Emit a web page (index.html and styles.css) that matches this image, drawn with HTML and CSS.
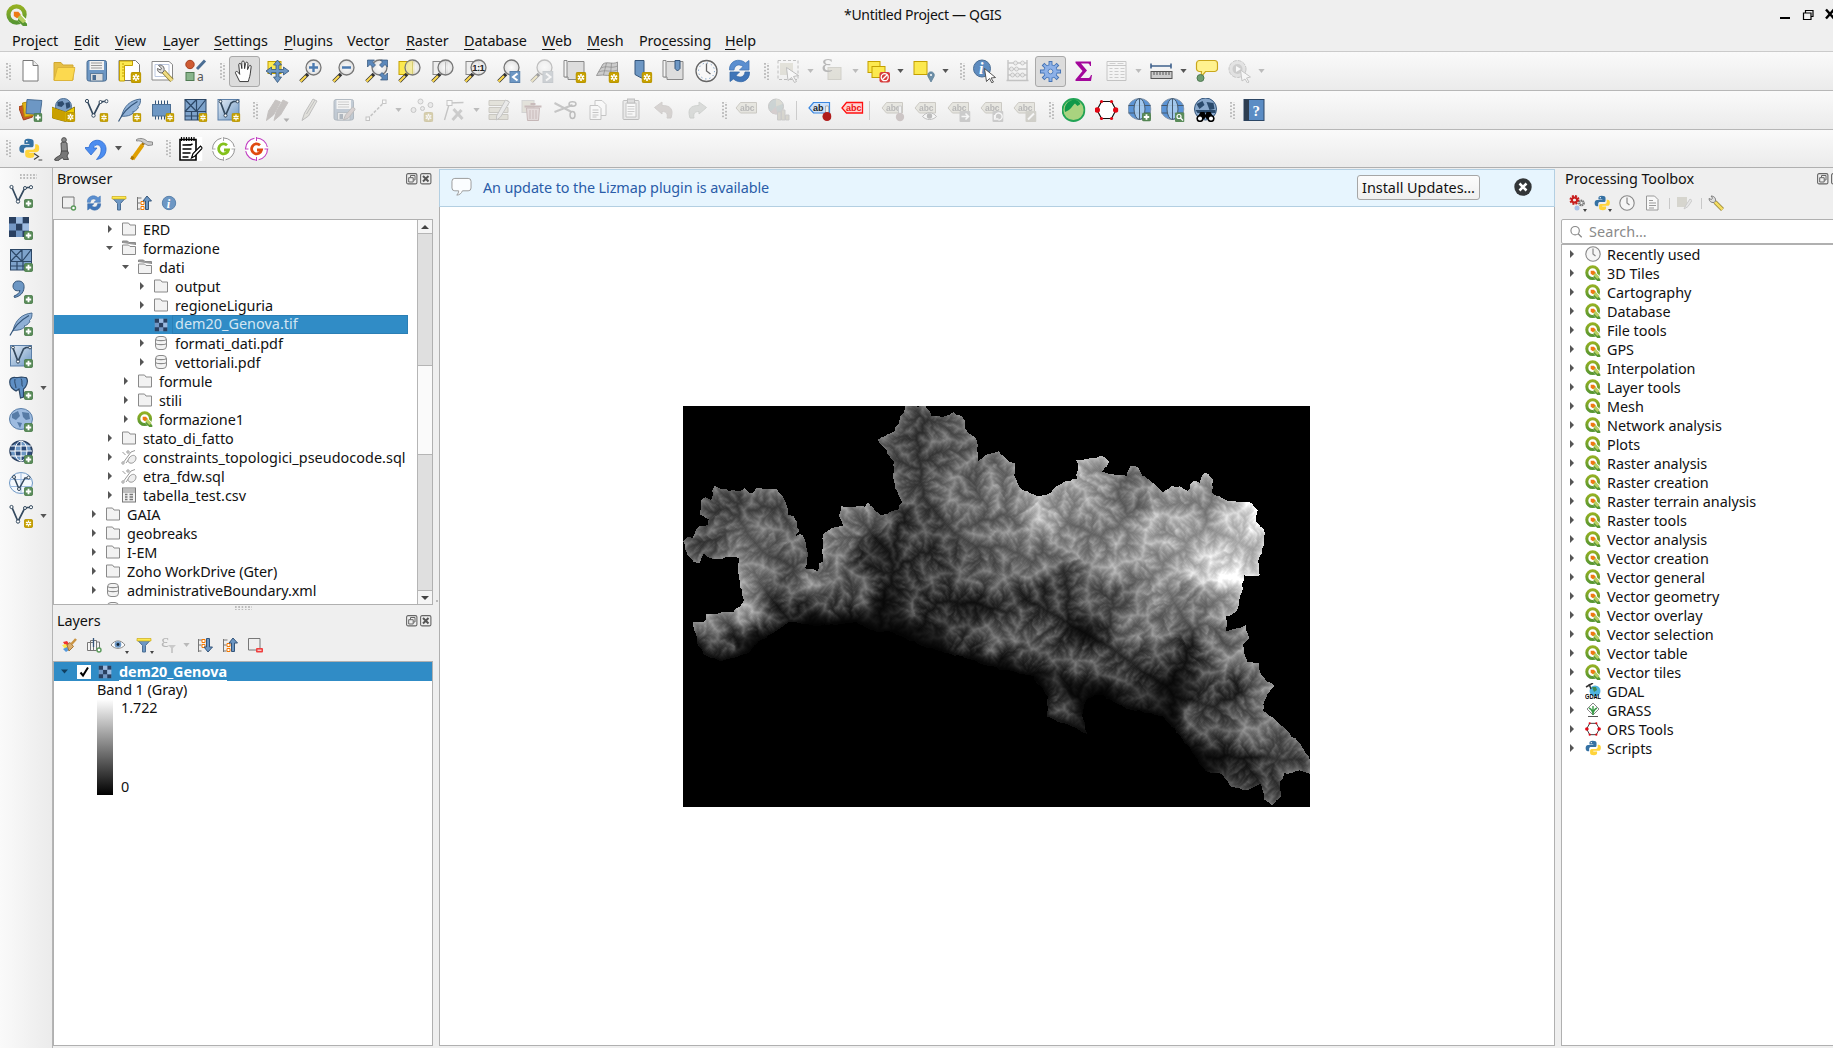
FILE: index.html
```html
<!DOCTYPE html>
<html lang="en">
<head>
<meta charset="utf-8">
<title>*Untitled Project — QGIS</title>
<link rel="stylesheet" href="styles.css">
</head>
<body>
<svg class="defs" aria-hidden="true">
<defs>
<linearGradient id="gq" x1="0" y1="0" x2="0" y2="1"><stop offset="0" stop-color="#93b023"/><stop offset="1" stop-color="#589632"/></linearGradient>
<linearGradient id="gb" x1="0" y1="0" x2="1" y2="1"><stop offset="0" stop-color="#e4ecf5"/><stop offset="1" stop-color="#6d97c4"/></linearGradient>
<radialGradient id="gl"><stop offset="0" stop-color="#fff"/><stop offset="1" stop-color="#ddd"/></radialGradient>
</defs>
<symbol id="star" viewBox="0 0 10 10"><rect x=".5" y=".5" width="9" height="9" rx="1.5" fill="#c8a200" stroke="#b89500"/><path d="M5 1.8v6.4M2.2 3.4l5.6 3.2M7.8 3.4L2.2 6.6" stroke="#fff" stroke-width="1.5"/><circle cx="5" cy="5" r=".8" fill="#c8a200"/></symbol>
<symbol id="plus" viewBox="0 0 10 10"><rect x=".5" y=".5" width="9" height="9" rx="1.5" fill="#5a8c5a" stroke="#4c7e4c"/><path d="M5 2v6M2 5h6" stroke="#fff" stroke-width="2"/></symbol>
<symbol id="qgis" viewBox="0 0 24 24"><circle cx="11.5" cy="11.5" r="8.8" fill="none" stroke="url(#gq)" stroke-width="4.6"/><path d="M13 12h4.5l6 6v5.5H18l-6-6z" fill="#fff"/><path d="M15 13.5l8 8V24h-4.5l-6-6z" fill="#589632"/><path d="M11 11h4l7 7.5-3.5 2.5-7.5-7z" fill="#b5cf60"/><path d="M8.500 8.500h5l2.500 3-4 4-3.500-2.500z" fill="#ee7913"/></symbol>
<symbol id="new" viewBox="0 0 24 24"><path d="M4.500 1.500h10l5 5v15.500h-15z" fill="#fff" stroke="#777"/><path d="M14.500 1.500v5h5" fill="#eee" stroke="#777"/></symbol>
<symbol id="open" viewBox="0 0 24 24"><path d="M2.500 21V3.500h7l2 2.500h10v15z" fill="#e6bf44" stroke="#d0a730"/><path d="M2.500 21.500L6 8.500h17.500L21 21.500z" fill="#fcd94f" stroke="#dcb43a"/></symbol>
<symbol id="save" viewBox="0 0 24 24"><rect x="2.500" y="1.500" width="19.500" height="20.500" rx="2" fill="#6d97c4" stroke="#4b6e94"/><rect x="5" y="2" width="14.500" height="9" fill="#f2f2f2"/><path d="M6.500 4h11M6.500 6.500h11M6.500 9h11" stroke="#999"/><rect x="6" y="14.500" width="12.500" height="7.500" fill="#ddd" stroke="#5d7c9c"/><rect x="8" y="16" width="3.500" height="5" fill="#4a6c92"/></symbol>
<symbol id="layout" viewBox="0 0 24 24"><path d="M1.500 1.500h16.500l4 4v16h-20.500z" fill="#fff" stroke="#777"/><path d="M2 2h13v4.500H7V22H2z" fill="#fce94f" stroke="#c4a000"/><path d="M4.500 5h2M4.500 8h2M4.500 11h2M4.500 14h2M4.500 17h2" stroke="#c4a000"/><use href="#star" x="13" y="13" width="11" height="11"/></symbol>
<symbol id="layman" viewBox="0 0 24 24"><path d="M1.500 2.500h17l3.500 3v15.500h-20.500z" fill="#fff" stroke="#888"/><path d="M4.500 5.500h14v12h-14z" fill="none" stroke="#bcc8e0"/><path d="M13 12.500l8.500 9" stroke="#8a7a30" stroke-width="4.600"/><path d="M13 12.500l8.500 9" stroke="#f0dc82" stroke-width="3"/><path d="M8 6.500c3-1.500 6.500 1 5.500 5.500l-2 2c-3 0-5-2-4.500-4.500l3 1.500 1-2z" fill="#ddd" stroke="#666"/></symbol>
<symbol id="style" viewBox="0 0 24 24"><circle cx="6.500" cy="5.500" r="4.200" fill="#cf5c34" stroke="#a54020"/><path d="M13.500 10l8-8.500" stroke="#4b6e94" stroke-width="3"/><rect x="2.500" y="13.500" width="8" height="8" fill="#89b58c" stroke="#4f7a52"/><text x="13.500" y="22" font-family="Noto Sans" font-size="12" fill="#555">a</text></symbol>
<symbol id="hand" viewBox="0 0 24 24"><path d="M7 22.500L3 14.500c-1.500-2.500 1-3.500 2.500-1.500l1.500 2-1-10c0-2 2.300-2 2.600 0l.6 4V2.500c0-2 2.500-2 2.600 0l.3 6.500 1-5.500c.3-2 2.700-1.500 2.500.5l-.4 6 1.500-3.500c.8-1.700 2.700-1 2.200 1L18 14.500c-.6 4-1.500 5-2 8z" fill="#fff" stroke="#333"/></symbol>
<symbol id="panto" viewBox="0 0 24 24"><rect x="2.500" y="2.500" width="13" height="12" fill="#fce94f" stroke="#c4a000"/><path d="M12 1l4 5h-2.500v4.500H18V8l5.500 4-5.500 4v-2.500h-4.500V18H16l-4 5.500L8 18h2.500v-4.500H6V16L.5 12 6 8v2.500h4.500V6H8z" fill="#6d97c4" stroke="#34557a" stroke-width=".8"/></symbol>
<symbol id="lens" viewBox="0 0 24 24"><path d="M2 22.500L9.500 15" stroke="#333" stroke-width="3.600"/><path d="M2 22.500l5.500-5.500" stroke="#fcd94f" stroke-width="2.200"/><circle cx="15" cy="8.500" r="7.500" fill="url(#gl)" stroke="#777" stroke-width="1.300" fill-opacity=".8"/></symbol>
<symbol id="zin" viewBox="0 0 24 24"><use href="#lens"/><path d="M15 4v9M10.500 8.500h9" stroke="#4b7ab0" stroke-width="2.400"/></symbol>
<symbol id="zout" viewBox="0 0 24 24"><use href="#lens"/><path d="M10.500 8.500h9" stroke="#4b7ab0" stroke-width="2.400"/></symbol>
<symbol id="zfull" viewBox="0 0 24 24"><use href="#lens"/><path d="M3 1h7L8 3l3 3-2.500 2.500-3-3L3 8zM23 1h-7l2 2-3 3 2.500 2.500 3-3L23 8zM23 21h-7l2-2-3-3 2.500-2.500 3 3 2.500-2.500z" fill="#5b88bb" stroke="#34557a" stroke-width=".7"/></symbol>
<symbol id="zsel" viewBox="0 0 24 24"><rect x="1.500" y="2.500" width="15" height="13" fill="#fce94f" stroke="#c4a000"/><use href="#lens"/><path d="M15 2.500v12.500" stroke="#c9c16a"/><path d="M9 4a7.500 7.500 0 0 1 6-2.500V15A7 7 0 0 1 9 12z" fill="#f3e882" opacity=".6"/></symbol>
<symbol id="zlay" viewBox="0 0 24 24"><rect x="2.500" y="2.500" width="14" height="13" fill="#eee" stroke="#888"/><use href="#lens"/><path d="M15 3v12" stroke="#bbb"/></symbol>
<symbol id="z11" viewBox="0 0 24 24"><rect x="2.500" y="2.500" width="13" height="13" fill="#eee" stroke="#888"/><use href="#lens"/><text x="8.700" y="12" font-family="Liberation Sans" font-weight="bold" font-size="9.500" fill="#222" textLength="12.500">1:1</text></symbol>
<symbol id="zlast" viewBox="0 0 24 24"><use href="#lens"/><rect x="13.500" y="12.500" width="10" height="11" fill="#6d97c4" stroke="#5b82ac"/><path d="M21 14.500L16.500 18l4.500 3.500" fill="none" stroke="#fff" stroke-width="2"/></symbol>
<symbol id="znext" viewBox="0 0 24 24"><use href="#lens"/><rect x="13.500" y="12.500" width="10" height="11" fill="#9ab" stroke="#89a"/><path d="M16.500 14.500L21 18l-4.500 3.500" fill="none" stroke="#fff" stroke-width="2"/></symbol>
<symbol id="map" viewBox="0 0 24 24"><path d="M5.500 2.500h16v18h-16v-2.500H3.500c-2 0-2-2.500 0-2.500V2.500" fill="#ddd" stroke="#888"/><path d="M1.500 1.500h3v16.500h-3z" fill="#f4f4f4" stroke="#888"/></symbol>
<symbol id="newmap" viewBox="0 0 24 24"><use href="#map"/><use href="#star" x="13" y="13" width="11" height="11"/></symbol>
<symbol id="new3d" viewBox="0 0 24 24"><path d="M1 16.500L7.500 5c4-3 10 1 14.500-2v13c-6 2-13-1-21 .5z" fill="#ccc" stroke="#999"/><path d="M5.500 9c6-3 10 1 16.500-2M3 13c7-3 12 1 19-2M11 4L8 16M16 4l-1 12" stroke="#888" fill="none" stroke-width=".7"/><use href="#star" x="13" y="13" width="11" height="11"/></symbol>
<symbol id="newbm" viewBox="0 0 24 24"><path d="M6.500 1.500h9V20l-4.500-2-4.500-2.500z" fill="#6d97c4" stroke="#34557a"/><use href="#star" x="13" y="13" width="11" height="11"/></symbol>
<symbol id="bm" viewBox="0 0 24 24"><use href="#map"/><path d="M13.500 1.500h5v8L16 12l-2.500-2.500z" fill="#6d97c4" stroke="#34557a"/></symbol>
<symbol id="clock" viewBox="0 0 24 24"><circle cx="12" cy="12" r="10.500" fill="#f8f8f8" stroke="#666" stroke-width="1.300"/><circle cx="12" cy="12" r="8" fill="none" stroke="#6d97c4" stroke-dasharray="1.200 3"/><path d="M12 4.500V12l4 3" fill="none" stroke="#666" stroke-width="1.300"/></symbol>
<symbol id="refresh" viewBox="0 0 24 24"><path d="M2 11C1.500 1.500 12-1.500 18 4l3.500-2.500V11H12l3.500-3.500C11.500 4.500 7 6 6.500 11z" fill="#5b8fd0" stroke="#4477b5" stroke-width=".8"/><path d="M22 13c.5 9.500-10 12.500-16 7l-3.500 2.500V13H12l-3.500 3.500c4 3 8.500 1.500 9-3.500z" fill="#3f75b8" stroke="#366aa8" stroke-width=".8"/></symbol>
<symbol id="select" viewBox="0 0 24 24"><rect x="1.500" y="1.500" width="20" height="19" fill="none" stroke="#777" stroke-dasharray="3 2"/><rect x="3.500" y="4" width="13" height="12" fill="#cfc9a6"/><path d="M10 8.500l12 8-5 1 3 5-2 1-3-5-3.500 3z" fill="#fff" stroke="#777"/></symbol>
<symbol id="selexp" viewBox="0 0 24 24"><rect x="6.500" y="8.500" width="13" height="12" fill="#cfc9a6" stroke="#aaa489"/><text x="0" y="13" font-family="Liberation Serif" font-size="27" fill="#666">ε</text></symbol>
<symbol id="desel" viewBox="0 0 24 24"><rect x="1.500" y="2.500" width="12" height="11" fill="#fce94f" stroke="#c4a000"/><rect x="5.500" y="7.500" width="13" height="11" fill="#fce94f" stroke="#c4a000"/><rect x="13" y="13" width="10.500" height="10.500" rx="2" fill="#d63b3b"/><circle cx="18.200" cy="18.200" r="3.500" fill="none" stroke="#fff" stroke-width="1.300"/><path d="M15.700 20.700l5-5" stroke="#fff" stroke-width="1.300"/></symbol>
<symbol id="selloc" viewBox="0 0 24 24"><rect x="2.500" y="2.500" width="13" height="13" fill="#fce94f" stroke="#c4a000"/><path d="M19.500 23l-3-5.500a3.300 3.300 0 1 1 6 0z" fill="#6d8fa8" stroke="#557891" stroke-width=".7"/><circle cx="19.500" cy="16" r="1" fill="#fff"/></symbol>
<symbol id="info" viewBox="0 0 24 24"><circle cx="9.500" cy="9.500" r="8.500" fill="#5e8cc0" stroke="#4b6e94"/><text x="6.500" y="15" font-family="Liberation Serif" font-style="italic" font-weight="bold" font-size="16" fill="#fff">i</text><path d="M12 9.500l11 9-4.500.5 2.500 4-1.500 1-2.500-4.500-3 3z" fill="#fff" stroke="#444" stroke-width=".9"/></symbol>
<symbol id="abacus" viewBox="0 0 24 24"><path d="M2.500 1v20M21.500 1v20M1 21.500h22M2 4h20M2 10h20M2 16h20" stroke="#888" stroke-width="1.500"/><g fill="#ddd" stroke="#888"><circle cx="10" cy="4" r="2"/><circle cx="17" cy="4" r="2"/><circle cx="6" cy="10" r="2"/><circle cx="11" cy="10" r="2"/><circle cx="7" cy="16" r="2"/><circle cx="12" cy="16" r="2"/><circle cx="17" cy="16" r="2"/></g></symbol>
<symbol id="gear" viewBox="0 0 24 24"><g stroke="#4573b4" stroke-width="4"><path d="M12 1v22M1 12h22M4.200 4.200l15.600 15.600M19.800 4.200L4.200 19.800"/></g><circle cx="12" cy="12" r="7" fill="#8db1e8" stroke="#4f7ec0"/><g stroke="#8db1e8" stroke-width="2.200"><path d="M12 2v20M2 12h20M5 5l14 14M19 5L5 19"/></g><circle cx="12" cy="12" r="2.500" fill="#dcdcdc" stroke="#4f7ec0"/></symbol>
<symbol id="sigma" viewBox="0 0 24 24"><path d="M4 2.500h15.500V7h-1c-.5-2-1-2.500-3-2.500H9.500l6 7-6.500 7.500h7c2 0 2.500-.5 3.500-3h1l-1 6H4v-1.500l7-8.500-7-8z" fill="#a3079b"/></symbol>
<symbol id="table" viewBox="0 0 24 24"><path d="M2.500 2.500h19v19h-19zM2.500 6.500h19" fill="#f8f8f8" stroke="#888"/><path d="M5 4.500h6M13 4.500h6M5 9.500h3M5 12.500h3M5 15.500h3M5 18.500h3M10 9.500h4M10 12.500h4M10 15.500h4M10 18.500h4M16 9.500h4M16 12.500h4M16 15.500h4M16 18.500h4" stroke="#999"/></symbol>
<symbol id="ruler" viewBox="0 0 24 24"><path d="M1.500 7h20M1.500 4.500v5M21.500 4.500v5" stroke="#3f618c" stroke-width="1.600"/><rect x="1.500" y="12.500" width="21" height="7" fill="#ccc" stroke="#555"/><path d="M4.500 13v3M7.500 13v3M10.500 13v3M13.500 13v3M16.500 13v3M19.500 13v3" stroke="#555"/></symbol>
<symbol id="tip" viewBox="0 0 24 24"><path d="M5 1.500h15a3 3 0 0 1 3 3v5a3 3 0 0 1-3 3h-9L6.500 18 7 12.500H5a3 3 0 0 1-3-3v-5a3 3 0 0 1 3-3z" fill="#fff28f" stroke="#c9a71c" stroke-width="1.200"/><circle cx="6" cy="19" r="3.500" fill="#6f9d72" stroke="#4f7a52"/></symbol>
<symbol id="action" viewBox="0 0 24 24"><circle cx="10" cy="10" r="8.500" fill="#ccc" stroke="#888" stroke-dasharray="4 1"/><circle cx="10" cy="10" r="5" fill="#999"/><path d="M8.500 7l5 3-5 3z" fill="#fff"/><path d="M13 11l10 7-4 1 2.500 4-1.500 1-2.500-4-3 2z" fill="#fff" stroke="#888"/></symbol>
<symbol id="addsrc" viewBox="0 0 24 24"><path d="M0 9l9-3 5 13-9 3z" fill="#c8582c" stroke="#a04018"/><path d="M4 5l10-2 2 14-10 2z" fill="#e3b51e" stroke="#b98e00"/><path d="M8.500 1.500l15 1-2 14-14-1z" fill="#6d97c4" stroke="#4b6e94"/><use href="#plus" x="15" y="15" width="9" height="9"/></symbol>
<symbol id="gpkg" viewBox="0 0 24 24"><circle cx="12" cy="8.500" r="8" fill="#7d9fc6" stroke="#4b6e94"/><path d="M6 4l5-1 2 3-3 3-4-1zM14 5l4-1 1 5-4 2z" fill="#2d4b6e"/><path d="M0 9l14 5 9-5v10l-9 4.500L1 20z" fill="#f0d000" stroke="#806800" stroke-width=".8"/><path d="M1 10l13 4v9.500L1 20z" fill="#c9a000"/><use href="#star" x="14" y="14" width="10" height="10"/></symbol>
<symbol id="vee" viewBox="0 0 24 24"><path d="M3 3.500L9 17.500 15 5.500 18 3.500h4" fill="none" stroke="#34495e" stroke-width="1.700"/><g fill="#fff" stroke="#34495e"><circle cx="2.500" cy="3" r="1.600"/><circle cx="9" cy="17.500" r="1.700"/><circle cx="22" cy="3.200" r="1.600"/><circle cx="16" cy="4" r="1.500"/></g></symbol>
<symbol id="newshp" viewBox="0 0 24 24"><use href="#vee"/><use href="#star" x="15" y="15" width="9" height="9"/></symbol>
<symbol id="feather" viewBox="0 0 24 24"><path d="M4 19C6 8 13 2 23 1c0 5-1 6-3 8l1 .5c-2 3-4 4-6 4.500l1 .8c-3 3-7 3.500-11 3.500z" fill="#8fb0d6" stroke="#4b6e94"/><path d="M1 23.500C5 15 12 8 20 3.500" fill="none" stroke="#34557a" stroke-width="1.200"/></symbol>
<symbol id="newfea" viewBox="0 0 24 24"><use href="#feather"/><use href="#star" x="15" y="15" width="9" height="9"/></symbol>
<symbol id="chip" viewBox="0 0 24 24"><path d="M5 2.500v19M8 2.500v19M11 2.500v19M14 2.500v19M17 2.500v15" stroke="#34557a"/><rect x="2" y="6.500" width="18" height="11.500" fill="#6d97c4" stroke="#4b6e94"/><use href="#star" x="15" y="15" width="9" height="9"/></symbol>
<symbol id="meshi" viewBox="0 0 24 24"><rect x="1.500" y="1.500" width="21" height="20.500" fill="#7ea3cb" stroke="#2c4766"/><path d="M1.500 13.500h21M13 1.500v12M8 13.500v8.500M14 13.500v8.500M1.500 1.500l11.500 12M13 1.500l-11.500 12M22 2l-9 11.500M1.500 18h21" stroke="#2c4766" stroke-width="1.200"/></symbol>
<symbol id="newmesh" viewBox="0 0 24 24"><use href="#meshi"/><use href="#star" x="15" y="15" width="9" height="9"/></symbol>
<symbol id="vbox" viewBox="0 0 24 24"><rect x="1.500" y="1.500" width="21" height="20.500" fill="url(#gb)" stroke="#5b7fa8"/><path d="M4 4l5 13.500 5.500-12.500L17 3.500h4" fill="none" stroke="#34495e" stroke-width="1.700"/><g fill="#fff" stroke="#34495e"><circle cx="4" cy="3.500" r="1.400"/><circle cx="9" cy="17.500" r="1.600"/><circle cx="21" cy="3.500" r="1.400"/></g></symbol>
<symbol id="newvt" viewBox="0 0 24 24"><use href="#vbox"/><use href="#star" x="15" y="15" width="9" height="9"/></symbol>
<symbol id="pens" viewBox="0 0 24 24"><path d="M1 22.500L3 13 10 2l5 2-7 13zM8.500 22.500L11 13l6.500-11 5 2.500-7.500 12.500z" fill="#8f7f78" stroke="#8f7f78"/><path d="M18 20.500h6l-3 3.500z" fill="#555"/></symbol>
<symbol id="pen" viewBox="0 0 24 24"><path d="M3.500 22.500L6 15 14.500 1l4 2-8.500 15z" fill="#cdc8b0" stroke="#777"/><path d="M8 16L16.500 2" stroke="#777"/></symbol>
<symbol id="saveed" viewBox="0 0 24 24"><use href="#save"/><path d="M12 22l2-5 7-8 3 2-7 9z" fill="#c0a0a0" stroke="#777"/></symbol>
<symbol id="line" viewBox="0 0 24 24"><path d="M3 21L20 4" stroke="#888" stroke-width="1.600" stroke-dasharray="3 1.500"/><rect x="1.500" y="19" width="3.500" height="3.500" fill="#fff" stroke="#888"/><rect x="18" y="2" width="3.500" height="3.500" fill="#fff" stroke="#888"/></symbol>
<symbol id="points" viewBox="0 0 24 24"><g fill="#ddd" stroke="#888"><circle cx="4" cy="12" r="2.500"/><circle cx="11" cy="3.500" r="2.500"/><circle cx="21" cy="7" r="2.500"/><circle cx="13" cy="10.500" r="2"/></g><use href="#star" x="14" y="14" width="10" height="10"/></symbol>
<symbol id="vertex" viewBox="0 0 24 24"><path d="M2 22L7 5l14-.5" stroke="#888" fill="none" stroke-width="1.400"/><rect x="4.500" y="2.500" width="5" height="5" fill="#fff" stroke="#888"/><path d="M10 22l9-10M11 11l9 10" stroke="#999" stroke-width="3"/></symbol>
<symbol id="attrs" viewBox="0 0 24 24"><path d="M1.500 2.500h19v5h-19zM1.500 9.500h19v5h-19zM1.500 16.500h19v5h-19z" fill="#cfc9a6" stroke="#999074"/><path d="M9 18L18 2l4 2-9 15-4 3z" fill="#ddd" stroke="#888"/></symbol>
<symbol id="trash" viewBox="0 0 24 24"><rect x="1.500" y="2.500" width="12" height="12" fill="#cfc9a6" stroke="#aaa"/><path d="M4 8.500h17M10 6h5" stroke="#a66" stroke-width="2"/><path d="M6 10h13l-1 12.500H7z" fill="#e0b8b8" stroke="#a66"/><path d="M9.500 12v9M12.500 12v9M15.500 12v9" stroke="#a66"/></symbol>
<symbol id="cut" viewBox="0 0 24 24"><path d="M1 5l17 9M1 14l18-7" stroke="#888" stroke-width="2"/><ellipse cx="19" cy="6" rx="3.500" ry="2.200" fill="none" stroke="#777" stroke-width="1.500"/><ellipse cx="19" cy="17" rx="2.500" ry="3.500" fill="none" stroke="#777" stroke-width="1.500"/></symbol>
<symbol id="copy" viewBox="0 0 24 24"><path d="M8.500 2.500h7l4 4v11h-11z" fill="#fff" stroke="#888"/><path d="M3.500 7.500h8l3 3v11h-11zM6 12h6M6 14.500h6M6 17h6M6 19h4" fill="#fff" stroke="#888"/></symbol>
<symbol id="paste" viewBox="0 0 24 24"><rect x="3.500" y="2.500" width="16" height="19" rx="1" fill="#ddd" stroke="#777"/><path d="M6.500 5h10v14h-10z" fill="#fff" stroke="#888"/><rect x="8" y="1" width="7" height="4" fill="#bbb" stroke="#777"/><path d="M8 8.500h7M8 11h7M8 13.500h7M8 16h5" stroke="#999"/></symbol>
<symbol id="undo" viewBox="0 0 24 24"><path d="M2 9.500L9.500 4v3.500c8 0 12 3 9 12.500h-4c1-4.500-.5-6.500-5-6.500V16z" fill="#b8a8a0" stroke="#a89a94"/></symbol>
<symbol id="redo" viewBox="0 0 24 24"><path d="M21 9.500L13.500 4v3.500c-8 0-12 3-9 12.500h4c-1-4.500.5-6.500 5-6.500V16z" fill="#b4bcb4" stroke="#98a498"/></symbol>
<symbol id="tag" viewBox="0 0 24 24"><path d="M1.500 10L6 4.500h16v10.500H6z" fill="#d8d3b8" stroke="#999074"/><text x="5.500" y="12.500" font-family="Liberation Sans" font-weight="bold" font-size="8.500" fill="#666">abc</text></symbol>
<symbol id="diag" viewBox="0 0 24 24"><circle cx="8.500" cy="8.500" r="7.500" fill="#8aa" stroke="#888"/><path d="M8.500 8.500L3 14a8 8 0 0 0 7 2z" fill="#b99"/><path d="M8.500 8.500V1A7.500 7.500 0 0 1 15 6z" fill="#bb9"/><path d="M10 14h3.500v8H10zM14 12h3.500v10H14zM18 17h3.500v5H18z" fill="#b8b090" stroke="#999"/></symbol>
<symbol id="pinb" viewBox="0 0 24 24"><path d="M1.500 10L6 4.500h16v10.500H6z" fill="#cfe3fb" stroke="#3a87e0" stroke-width="1.200"/><text x="5.500" y="13" font-family="Liberation Sans" font-weight="bold" font-size="9" fill="#222">ab</text><path d="M18 8h3v9h-3z" fill="#eee" stroke="#999" stroke-width=".7"/><circle cx="19.500" cy="18.500" r="4.500" fill="#b01c1c"/></symbol>
<symbol id="abcred" viewBox="0 0 24 24"><path d="M1.500 10L6 4.500h16v10.500H6z" fill="#ffd4d4" stroke="#f11" stroke-width="1.300"/><text x="5.500" y="13" font-family="Liberation Sans" font-weight="bold" font-size="9" fill="#e11">abc</text></symbol>
<symbol id="tpin" viewBox="0 0 24 24"><use href="#tag"/><path d="M18 8h3v9h-3z" fill="#eee" stroke="#999"/><circle cx="19.500" cy="19" r="4.200" fill="#a88"/></symbol>
<symbol id="teye" viewBox="0 0 24 24"><use href="#tag"/><path d="M9 18.500c4-5 10-5 14 0-4 4-10 4-14 0z" fill="#fff" stroke="#777"/><circle cx="16" cy="18" r="2.700" fill="#777"/></symbol>
<symbol id="tmove" viewBox="0 0 24 24"><use href="#tag"/><rect x="13" y="13" width="11" height="11" rx="1" fill="#999"/><path d="M15 18.500h7M19 15.500l3 3-3 3" stroke="#fff" fill="none" stroke-width="1.600"/></symbol>
<symbol id="trot" viewBox="0 0 24 24"><use href="#tag"/><rect x="13" y="13" width="11" height="11" rx="1" fill="#999"/><path d="M16 20a3.500 3.500 0 1 1 3 2M15 17v4h4" stroke="#fff" fill="none" stroke-width="1.400"/></symbol>
<symbol id="tedit" viewBox="0 0 24 24"><use href="#tag"/><rect x="13" y="13" width="11" height="11" rx="1" fill="#a9a488"/><path d="M15.500 21.500l6-6" stroke="#fff" stroke-width="2"/></symbol>
<symbol id="planet" viewBox="0 0 24 24"><circle cx="12" cy="12" r="11" fill="#a9d37f" stroke="#22a455" stroke-width="1.800"/><path d="M3.500 14C2 8 6 2 13 1.800c3 .5 5 2 6 4.200l-3 2-2.500-2.500C11 7 10 12 3.500 14z" fill="#10994a"/></symbol>
<symbol id="ors" viewBox="0 0 24 24"><path d="M2.500 12L7 3.500h10l4.500 8.500L17 20.500H7z" fill="#fff" stroke="#111" stroke-width="1.200"/><g fill="#e30613"><circle cx="2.800" cy="12" r="2.700"/><circle cx="21.200" cy="12" r="2.700"/><circle cx="7" cy="3.500" r="1.600"/><circle cx="17" cy="3.500" r="1.600"/><circle cx="7" cy="20.500" r="1.600"/><circle cx="17" cy="20.500" r="1.600"/></g></symbol>
<symbol id="globe" viewBox="0 0 24 24"><ellipse cx="12" cy="11" rx="11.500" ry="10.500" fill="#5b94d6" stroke="#8a9aac"/><path d="M1 7.500h22M1 15h22" stroke="#445a70" stroke-width="1.200"/><ellipse cx="12" cy="11" rx="5.500" ry="10.500" fill="#b4d4f4" fill-opacity=".8" stroke="#445a70"/><path d="M12 .5v21" stroke="#445a70"/></symbol>
<symbol id="gadd" viewBox="0 0 24 24"><use href="#globe"/><use href="#plus" x="14.500" y="14.500" width="9" height="9"/></symbol>
<symbol id="gfind" viewBox="0 0 24 24"><use href="#globe"/><rect x="14.500" y="14.500" width="9.500" height="9.500" rx="1" fill="#5a8c5a"/><circle cx="18.500" cy="18.500" r="2" fill="none" stroke="#fff" stroke-width="1.200"/><path d="M20 20l2.500 2.500" stroke="#fff" stroke-width="1.300"/></symbol>
<symbol id="gbino" viewBox="0 0 24 24"><circle cx="12" cy="11" r="11" fill="#88a8cc" stroke="#34557a"/><path d="M3 6l6-3 2 4-5 4zM13 4l7 1 1 6-5 1zM2 12h20v3H4z" fill="#2a4a6c"/><path d="M7 14h4l1 3 1-3h4l4 7h-8l-1-2-1 2H3z" fill="#000"/><circle cx="6.500" cy="20.500" r="2.800" fill="#fff" stroke="#000" stroke-width="1.500"/><circle cx="17.500" cy="20.500" r="2.800" fill="#fff" stroke="#000" stroke-width="1.500"/></symbol>
<symbol id="help" viewBox="0 0 24 24"><rect x="1.500" y="1.500" width="20" height="21" fill="#5b8cc4" stroke="#2c4766"/><path d="M1.500 1.500h5v21h-5z" fill="#2d3d50"/><text x="10" y="17.500" font-family="Liberation Serif" font-size="15" font-weight="bold" fill="#fff">?</text></symbol>
<symbol id="py" viewBox="0 0 24 24"><path d="M12 1c-4 0-5 1.500-5 3.500V7h6v1H5c-3 0-4 2-4 5s1.500 4.500 3.500 4.500H6.500V14c0-2 1.500-3 3-3h6c1.500 0 2.500-1 2.500-2.500v-4C18 2 16 1 12 1z" fill="#3571a3" transform="scale(.96)"/><path d="M13 23c4 0 5-1.500 5-3.500V17h-6v-1h8c3 0 4-2 4-5s-1.500-4.500-3.500-4.500H19V10c0 2-1.500 3-3 3h-6c-1.500 0-3 1-3 2.500v4C7 22 9 23 13 23z" fill="#ffd43b" transform="translate(1 1) scale(.95)"/><circle cx="9.500" cy="4" r="1" fill="#fff"/></symbol>
<symbol id="pycon" viewBox="0 0 24 24"><use href="#py" x="0" y="1" width="21" height="21"/><path d="M15.500 16.500l4.500 3-4.500 3" fill="none" stroke="#444" stroke-width="1.200"/><path d="M20 23h4" stroke="#444"/></symbol>
<symbol id="statue" viewBox="0 0 24 24"><circle cx="12.500" cy="3" r="2.400" fill="#888" stroke="#444" stroke-width=".8"/><path d="M9.500 6c2.500-1.200 4.500-1 6 0l.5 9H10z" fill="#8a8a8a" stroke="#444" stroke-width=".9"/><path d="M10 14h6l1 2-1.500 3 1.500 3.500h-5l-1-2-5 3.500-3-1 1-2 5-3z" fill="#777" stroke="#444" stroke-width=".9"/></symbol>
<symbol id="reload" viewBox="0 0 24 24"><path d="M12 22.500c7-1 10-6 9.500-11.500-1.500-10-15.500-10.500-17-.5H0l6.500 7.500 6-7H9c1-4.500 7-4 7.500.5C17 16 15 19 12 22.500z" fill="#4c8df0" stroke="#2e6dd0" stroke-width=".8"/></symbol>
<symbol id="hammer" viewBox="0 0 24 24"><path d="M3 22L13 8" stroke="#e0a000" stroke-width="4"/><path d="M2 22.500l1.500-3M13 8l1-2" stroke="#b07800" stroke-width="3"/><path d="M7 2.500c4-2 8-1 11 2l5 .5v3l-4.500.500-4.500-2.500c-2-2-4-2.500-7-2z" fill="#ccc" stroke="#777" stroke-width=".8"/></symbol>
<symbol id="note" viewBox="0 0 24 24"><path d="M0 0h24v24H0z" fill="#fff"/><path d="M1.500 2.500h16v20.500h-16z" fill="#fff" stroke="#000" stroke-width="1.600"/><path d="M3 0v4M5.500 0v4M8 0v4M10.500 0v4M13 0v4M15.500 0v4" stroke="#000" stroke-width="1.200"/><path d="M4 8h8l2-1M4 12h9M4 16h8M4 20h6" stroke="#000" stroke-width="1.400"/><path d="M13 21l1.500-4.500L22 9l2 2-7.500 8z" fill="#fff" stroke="#000" stroke-width="1.200"/></symbol>
<symbol id="gter1" viewBox="0 0 24 24"><circle cx="12" cy="12" r="11" fill="#fff" stroke="#888" stroke-width=".9" stroke-dasharray="15 2.200"/><path d="M12 0v4M12 20v4M0 12h4M20 12h4" stroke="#aaa"/><path d="M15.500 8.200A5 5 0 1 0 17 13H12.500" fill="none" stroke="#84c11c" stroke-width="2.800"/></symbol>
<symbol id="gter2" viewBox="0 0 24 24"><circle cx="12" cy="12" r="11" fill="#fff" stroke="#c23fc2" stroke-width="1.100" stroke-dasharray="15 2.200"/><path d="M12 0v4M12 20v4M0 12h4M20 12h4" stroke="#c23fc2"/><path d="M15.500 8.200A5 5 0 1 0 17 13H12.500" fill="none" stroke="#e04a10" stroke-width="2.800"/></symbol>
<symbol id="chk" viewBox="0 0 20 20"><path d="M0 0h20v20H0z" fill="#7397c4"/><path d="M0 0h7v6.500H0zM13.500 0h6.500v6.500h-6.500zM7 6.500h6.500v7H7zM0 13.500h7V20H0zM13.500 13.500H20V20h-6.500z" fill="#2a4060"/><path d="M7 0h6.500v6.500H7zM13.500 6.500H20v7h-6.500z" fill="#9dbbe0"/></symbol>
<symbol id="addras" viewBox="0 0 24 24"><use href="#chk" x="0" y="1" width="20" height="20"/><use href="#plus" x="15" y="15" width="9" height="9"/></symbol>
<symbol id="addvec" viewBox="0 0 24 24"><use href="#vee"/><use href="#plus" x="15" y="15" width="9" height="9"/></symbol>
<symbol id="addmesh" viewBox="0 0 24 24"><use href="#meshi"/><use href="#plus" x="15" y="15" width="9" height="9"/></symbol>
<symbol id="comma" viewBox="0 0 24 24"><path d="M4 6a5 5 0 0 1 5.500-5C14 1 15.500 4.500 15 8c-.5 5-4 8.500-9.500 9.500L5 16c3-1 5.500-3 6-5.500C7 11.500 4 10 4 6z" fill="#6d97c4" stroke="#34557a"/><use href="#plus" x="15" y="15" width="9" height="9"/></symbol>
<symbol id="addfea" viewBox="0 0 24 24"><use href="#feather"/><use href="#plus" x="15" y="15" width="9" height="9"/></symbol>
<symbol id="addvt" viewBox="0 0 24 24"><use href="#vbox"/><use href="#plus" x="15" y="15" width="9" height="9"/></symbol>
<symbol id="pg" viewBox="0 0 24 24"><path d="M1 4C3 0 6 2 9 1.500c4-1 5 0 8 0 2 2 1.500 6-.5 9.500l-2 2v8l-3 1-1.500-9-3 2C3 13 0 9 1 4z" fill="#5f8fc4" stroke="#2c4766" stroke-width="1.200"/><path d="M6 3c-1 4 1 6 1 9M12 2.500c2 3 0 6 1.500 8" fill="none" stroke="#2c4766"/><use href="#plus" x="15" y="15" width="9" height="9"/></symbol>
<symbol id="wms" viewBox="0 0 24 24"><ellipse cx="12" cy="11" rx="11.500" ry="10.500" fill="#9dbbe0" stroke="#5b7fa8"/><path d="M3 6l6-3 2 5-4 4-4-2zM13 4l7 1 1 6-4 1-3-3zM8 14l5 1-2 5z" fill="#567ba6"/><use href="#plus" x="15" y="15" width="9" height="9"/></symbol>
<symbol id="wcs" viewBox="0 0 24 24"><ellipse cx="12" cy="11" rx="11" ry="10" fill="#6d97c4" stroke="#2a4060" stroke-width="1.500"/><path d="M6 6h6V1H8zM12 6h6v5h-6zM1 11h5V6H2zM6 11h6v5H6zM18 11h5l-2 5h-3zM12 16h6l-3 5h-3z" fill="#2a4a78"/><path d="M1.500 6h21M1 11h22M2 16h20M12 1v20" stroke="#fff"/><ellipse cx="12" cy="11" rx="6" ry="10" fill="none" stroke="#fff"/><use href="#plus" x="15" y="15" width="9" height="9"/></symbol>
<symbol id="wfs" viewBox="0 0 24 24"><ellipse cx="12" cy="11" rx="11.500" ry="10.500" fill="#f4f8fd" stroke="#6d97c4"/><path d="M1 7.500h22M1 14.500h22M12 .5v21" stroke="#9dbbe0"/><path d="M5 5l5 12 6-11h4" fill="none" stroke="#34495e" stroke-width="1.500"/><g fill="#fff" stroke="#34495e"><circle cx="5" cy="5" r="1.500"/><circle cx="10" cy="17" r="1.500"/><circle cx="19.500" cy="5.500" r="1.500"/></g><use href="#plus" x="15" y="15" width="9" height="9"/></symbol>
<symbol id="folder" viewBox="0 0 16 16"><path d="M1.500 14V2h6l1.500 2h5.500v10z" fill="#f2f2f2" stroke="#8a8a8a"/></symbol>
<symbol id="fopen" viewBox="0 0 16 16"><path d="M1.500 3V1h5l1.500 1.500h6.500V5" fill="#999" stroke="#8a8a8a"/><path d="M1.500 14.500V5h6l1.500 1.500h5.500v8z" fill="#f2f2f2" stroke="#8a8a8a"/></symbol>
<symbol id="db" viewBox="0 0 16 16"><rect x="2.500" y="1.500" width="11" height="13" rx="3.500" fill="#f2f2f2" stroke="#8a8a8a"/><path d="M2.500 4.500c1 1.500 10 1.500 11 0M2.500 8.500c1 1.500 10 1.500 11 0" fill="none" stroke="#8a8a8a" stroke-width="1.300"/></symbol>
<symbol id="sql" viewBox="0 0 16 16"><path d="M2 14L10 3M5 14l3-4M1.500 3l3 3M10 3l4-1.500" stroke="#999"/><path d="M8 9c3-4 7-3 7 0s-3 6-6 5-2-3-1-5z" fill="#eee" stroke="#999"/><circle cx="2" cy="14" r="1.200" fill="#fff" stroke="#999"/><circle cx="7" cy="3" r="1.200" fill="#fff" stroke="#999"/></symbol>
<symbol id="csv" viewBox="0 0 16 16"><rect x="1.500" y="1" width="13" height="14" fill="#f2f2f2" stroke="#777"/><path d="M2 3h12M2 5h12" stroke="#888"/><path d="M4 7.500h2.500M4 10h2.500M4 12.500h2.500M8.500 7.500H12M8.500 10H12M8.500 12.500H12" stroke="#777" stroke-width="1.300"/></symbol>
<symbol id="ras" viewBox="0 0 16 16"><use href="#chk" x="1.500" y="1.500" width="13" height="13"/></symbol>
<symbol id="gdal" viewBox="0 0 16 16"><circle cx="10" cy="8" r="5.500" fill="#4fb3e0"/><path d="M7 4l4 0 1 3-3 2z" fill="#3f8a50"/><path d="M1 4l7-4M4 1l2 5" stroke="#333" stroke-width="1.500"/><text x="0" y="15.500" font-family="Liberation Sans" font-weight="bold" font-size="7" textLength="16" lengthAdjust="spacingAndGlyphs">GDAL</text></symbol>
<symbol id="grass" viewBox="0 0 16 16"><path d="M8 1l6 6-6 6-6-6z" fill="#fff" stroke="#888"/><path d="M8 13V4M8 13C8 9 6 7 4 6M8 13c0-4 2-6 4-7" stroke="#3a9a48" fill="none" stroke-width="1.400"/><path d="M3 14.500h10" stroke="#555"/></symbol>
<symbol id="addl" viewBox="0 0 16 16"><path d="M1.500 2h11.500v11H1.500z" fill="none" stroke="#777"/><circle cx="12.500" cy="13" r="2" fill="#fff" stroke="#5a9a5a" stroke-width="1.400"/></symbol>
<symbol id="funnel" viewBox="0 0 16 16"><path d="M1.500 3h13L9.500 8.500V15H6.500V8.500z" fill="#6d97c4" stroke="#4b6e94"/><path d="M1 1.500h14V4H1z" fill="#fce94f" stroke="#c4a000" stroke-width=".6"/></symbol>
<symbol id="coll" viewBox="0 0 16 16"><path d="M1.500 2v13M1.500 3h4M1.500 8h3M1.500 14h3" stroke="#777"/><path d="M5 6.500h3v3H5zM5 11.500h3v3H5z" fill="#fff" stroke="#f57900"/><path d="M11 1l4.500 5H12.500v8.500h-3V6H7z" fill="#6d97c4" stroke="#34557a"/></symbol>
<symbol id="expd" viewBox="0 0 16 16"><path d="M1.500 2v13M1.500 3h4M1.500 8h3M1.500 14h3" stroke="#777"/><path d="M5 2.500h3v3H5zM5 7.500h3v3H5z" fill="#fff" stroke="#f57900"/><path d="M11 15l4.500-5h-3V1.500h-3V10H7z" fill="#6d97c4" stroke="#34557a"/></symbol>
<symbol id="infos" viewBox="0 0 16 16"><circle cx="8" cy="8" r="6.700" fill="#6d97c4" stroke="#5b82ac"/><text x="5.800" y="12.500" font-family="Liberation Serif" font-style="italic" font-weight="bold" font-size="12.500" fill="#fff">i</text></symbol>
<symbol id="brush" viewBox="0 0 16 16"><path d="M2 5l4-1 3 4-3 3z" fill="#e33"/><path d="M1 8l4-1 2 3-3 2z" fill="#fce94f"/><path d="M2 12l4-2 2 3-3 2z" fill="#59d"/><path d="M6 8l3-2.500 3.500 4L8 14z" fill="#dcae6c" stroke="#a67634"/><path d="M10.500 7L15 2" stroke="#c9923f" stroke-width="2.500"/></symbol>
<symbol id="group" viewBox="0 0 16 16"><path d="M1.500 5.500h6v8h-6zM4.500 3.500h6v10h-6zM10.500 5h3v8" fill="#f4f4f4" stroke="#777"/><path d="M7.500 1v9" stroke="#34557a" stroke-width="1.300"/><circle cx="13" cy="13" r="2" fill="#fff" stroke="#5a9a5a" stroke-width="1.400"/></symbol>
<symbol id="eye" viewBox="0 0 16 16"><path d="M0 8c4-5.500 10-5.500 14 0-4 4.500-10 4.500-14 0z" fill="#fff" stroke="#888"/><circle cx="7" cy="7.500" r="3.300" fill="#6d97c4"/><circle cx="7" cy="7.500" r="1.400" fill="#123"/></symbol>
<symbol id="epsf" viewBox="0 0 16 16"><text x="0" y="9.500" font-family="Liberation Serif" font-size="19" fill="#666">ε</text><path d="M7 8h8l-3 3v5H10v-5z" fill="#999"/></symbol>
<symbol id="reml" viewBox="0 0 16 16"><path d="M1.500 1.500H13v11.500H1.500z" fill="none" stroke="#777"/><rect x="9" y="11" width="7" height="4.500" rx="1" fill="#ef4040"/><path d="M10.500 13.200h4" stroke="#fff"/></symbol>
<symbol id="gears" viewBox="0 0 16 16"><circle cx="5.500" cy="5" r="3.300" fill="none" stroke="#c81e1e" stroke-width="3.400" stroke-dasharray="1.600 1"/><circle cx="5.500" cy="5" r="2.600" fill="none" stroke="#c81e1e" stroke-width="2"/><circle cx="12.500" cy="8" r="2.200" fill="none" stroke="#777" stroke-width="2.400" stroke-dasharray="1.300 .4"/><circle cx="8" cy="13" r="2.500" fill="#a9bfe6"/></symbol>
<symbol id="doc" viewBox="0 0 16 16"><path d="M2.500 1h8l3.500 3.500V15H2.500z" fill="#f8f8f8" stroke="#999"/><path d="M5 5.500h4M5 8h7M5 10.500h7M5 13h5" stroke="#999"/></symbol>
<symbol id="editm" viewBox="0 0 16 16"><path d="M1 2h10v10H1z" fill="#b9b48f"/><path d="M8 14l2-4 4-6 2 1.500-4 6z" fill="#ddd" stroke="#999"/></symbol>
<symbol id="wrench" viewBox="0 0 16 16"><path d="M7 7l7.500 7.500" stroke="#8a7a30" stroke-width="4"/><path d="M7 7l7.500 7.500" stroke="#f4dc62" stroke-width="2.600"/><path d="M3 1c3 0 5 2 4.500 5L6 7.500C3 8 1 6 1 3.500l2.500 1 1-1.500z" fill="#ddd" stroke="#777" stroke-width=".9"/></symbol>
<symbol id="mag" viewBox="0 0 16 16"><circle cx="7" cy="6.500" r="4.800" fill="none" stroke="#888" stroke-width="1.300"/><path d="M10.500 10l4 4" stroke="#888" stroke-width="1.500"/></symbol>
<symbol id="clk" viewBox="0 0 16 16"><circle cx="8" cy="8" r="7.200" fill="#f6f6f6" stroke="#888" stroke-width="1.100"/><path d="M8 2.500V8l2.500 2" fill="none" stroke="#888" stroke-width="1.200"/></symbol>
<symbol id="float" viewBox="0 0 12 12"><rect x=".6" y=".6" width="10.300" height="10.300" rx="1.500" fill="none" stroke="#666" stroke-width="1.100"/><path d="M4.500 4.500v-2h4.500v4.500H7.500M2.700 4.700H7.200V9H2.700z" fill="none" stroke="#666"/></symbol>
<symbol id="close" viewBox="0 0 12 12"><rect x=".6" y=".6" width="10.300" height="10.300" rx="1.500" fill="none" stroke="#666" stroke-width="1.100"/><path d="M3 3l5.500 5.500M8.500 3L3 8.500" stroke="#555" stroke-width="2"/></symbol>
<symbol id="bubble" viewBox="0 0 22 20"><path d="M4 1h14a3 3 0 0 1 3 3v7a3 3 0 0 1-3 3h-6c-1 2.500-3 4.500-6 4.500 1.500-1.500 2-3 2-4.500H4a3 3 0 0 1-3-3V4a3 3 0 0 1 3-3z" fill="#fbfdff" stroke="#999"/></symbol>
</svg>

<div class="window">
<header class="titlebar">
  <svg class="logo"><use href="#qgis"/></svg>
  <h1>*Untitled Project — QGIS</h1>
  <svg class="winbtns" viewBox="0 0 56 14"><path d="M1 10h10" stroke="#000" stroke-width="2"/><path d="M24.500 5h7.500v6.500h-7.500zM26.500 5V2.500h7.500v6h-2" fill="none" stroke="#000" stroke-width="1.200"/><path d="M47 1.500l8 9M55 1.500l-8 9" stroke="#000" stroke-width="2.400"/></svg>
</header>
<nav class="menubar">
  <span>Pro<u>j</u>ect</span><span><u>E</u>dit</span><span><u>V</u>iew</span><span><u>L</u>ayer</span><span><u>S</u>ettings</span><span><u>P</u>lugins</span><span>Vect<u>o</u>r</span><span><u>R</u>aster</span><span><u>D</u>atabase</span><span><u>W</u>eb</span><span><u>M</u>esh</span><span>Pro<u>c</u>essing</span><span><u>H</u>elp</span>
</nav>

<div class="toolbar">
  <i class="grip"></i>
  <svg><use href="#new"/></svg><svg><use href="#open"/></svg><svg><use href="#save"/></svg><svg><use href="#layout"/></svg><svg><use href="#layman"/></svg><svg><use href="#style"/></svg>
  <i class="grip"></i>
  <svg class="pressed"><use href="#hand"/></svg><svg><use href="#panto"/></svg><svg><use href="#zin"/></svg><svg><use href="#zout"/></svg><svg><use href="#zfull"/></svg><svg><use href="#zsel"/></svg><svg><use href="#zlay"/></svg><svg><use href="#z11"/></svg><svg><use href="#zlast"/></svg><svg class="off"><use href="#znext"/></svg><svg><use href="#newmap"/></svg><svg><use href="#new3d"/></svg><svg><use href="#newbm"/></svg><svg><use href="#bm"/></svg><svg><use href="#clock"/></svg><svg><use href="#refresh"/></svg>
  <i class="grip"></i>
  <svg class="off"><use href="#select"/></svg><i class="drop off"></i><svg class="off"><use href="#selexp"/></svg><i class="drop off"></i><svg><use href="#desel"/></svg><i class="drop"></i><svg><use href="#selloc"/></svg><i class="drop"></i>
  <i class="grip"></i>
  <svg><use href="#info"/></svg><svg class="off"><use href="#abacus"/></svg><svg class="pressed"><use href="#gear"/></svg><svg><use href="#sigma"/></svg><svg class="off"><use href="#table"/></svg><i class="drop off"></i><svg><use href="#ruler"/></svg><i class="drop"></i><svg><use href="#tip"/></svg><svg class="off"><use href="#action"/></svg><i class="drop off"></i>
</div>
<div class="toolbar">
  <i class="grip"></i>
  <svg><use href="#addsrc"/></svg><svg><use href="#gpkg"/></svg><svg><use href="#newshp"/></svg><svg><use href="#newfea"/></svg><svg><use href="#chip"/></svg><svg><use href="#newmesh"/></svg><svg><use href="#newvt"/></svg>
  <i class="grip"></i>
  <svg class="off"><use href="#pens"/></svg><svg class="off"><use href="#pen"/></svg><svg class="off"><use href="#saveed"/></svg><svg class="off"><use href="#line"/></svg><i class="drop off"></i><svg class="off"><use href="#points"/></svg><svg class="off"><use href="#vertex"/></svg><i class="drop off"></i><svg class="off"><use href="#attrs"/></svg><svg class="off"><use href="#trash"/></svg><svg class="off"><use href="#cut"/></svg><svg class="off"><use href="#copy"/></svg><svg class="off"><use href="#paste"/></svg><svg class="off"><use href="#undo"/></svg><svg class="off"><use href="#redo"/></svg>
  <i class="grip"></i>
  <svg class="off"><use href="#tag"/></svg><svg class="off"><use href="#diag"/></svg><i class="sep"></i><svg><use href="#pinb"/></svg><svg><use href="#abcred"/></svg><i class="sep"></i><svg class="off"><use href="#tpin"/></svg><svg class="off"><use href="#teye"/></svg><svg class="off"><use href="#tmove"/></svg><svg class="off"><use href="#trot"/></svg><svg class="off"><use href="#tedit"/></svg>
  <i class="grip"></i>
  <svg><use href="#planet"/></svg><svg><use href="#ors"/></svg><svg><use href="#gadd"/></svg><svg><use href="#gfind"/></svg><svg><use href="#gbino"/></svg>
  <i class="grip"></i>
  <svg><use href="#help"/></svg>
</div>
<div class="toolbar last">
  <i class="grip"></i>
  <svg><use href="#pycon"/></svg><svg><use href="#statue"/></svg><svg><use href="#reload"/></svg><i class="drop"></i><svg><use href="#hammer"/></svg>
  <i class="grip"></i>
  <svg><use href="#note"/></svg><svg><use href="#gter1"/></svg><svg><use href="#gter2"/></svg>
</div>

<main class="work">
  <aside class="sidebar">
    <i class="hgrip"></i>
    <div><svg><use href="#addvec"/></svg></div><div><svg><use href="#addras"/></svg></div><div><svg><use href="#addmesh"/></svg></div><div><svg><use href="#comma"/></svg></div><div><svg><use href="#addfea"/></svg></div><div><svg><use href="#addvt"/></svg></div><div><svg><use href="#pg"/></svg><i class="drop"></i></div><div><svg><use href="#wms"/></svg></div><div><svg><use href="#wcs"/></svg></div><div><svg><use href="#wfs"/></svg></div><div><svg><use href="#newshp"/></svg><i class="drop"></i></div>
  </aside>

  <div class="docks">
    <section class="dock browser">
      <h2>Browser<svg><use href="#float"/></svg><svg><use href="#close"/></svg></h2>
      <div class="tools"><svg><use href="#addl"/></svg><svg><use href="#refresh"/></svg><svg><use href="#funnel"/></svg><svg><use href="#coll"/></svg><svg><use href="#infos"/></svg></div>
      <div class="frame">
        <ul class="tree">
          <li class="d1"><i class="right"></i><svg><use href="#folder"/></svg>ERD</li>
          <li class="d1"><i class="down"></i><svg><use href="#fopen"/></svg>formazione</li>
          <li class="d2"><i class="down"></i><svg><use href="#fopen"/></svg>dati</li>
          <li class="d3"><i class="right"></i><svg><use href="#folder"/></svg>output</li>
          <li class="d3"><i class="right"></i><svg><use href="#folder"/></svg>regioneLiguria</li>
          <li class="d3 sel"><i></i><svg><use href="#ras"/></svg><span>dem20_Genova.tif</span></li>
          <li class="d3"><i class="right"></i><svg><use href="#db"/></svg>formati_dati.pdf</li>
          <li class="d3"><i class="right"></i><svg><use href="#db"/></svg>vettoriali.pdf</li>
          <li class="d2"><i class="right"></i><svg><use href="#folder"/></svg>formule</li>
          <li class="d2"><i class="right"></i><svg><use href="#folder"/></svg>stili</li>
          <li class="d2"><i class="right"></i><svg><use href="#qgis"/></svg>formazione1</li>
          <li class="d1"><i class="right"></i><svg><use href="#folder"/></svg>stato_di_fatto</li>
          <li class="d1 wide"><i class="right"></i><svg><use href="#sql"/></svg>constraints_topologici_pseudocode.sql</li>
          <li class="d1 wide"><i class="right"></i><svg><use href="#sql"/></svg>etra_fdw.sql</li>
          <li class="d1 wide"><i class="right"></i><svg><use href="#csv"/></svg>tabella_test.csv</li>
          <li class="d0"><i class="right"></i><svg><use href="#folder"/></svg>GAIA</li>
          <li class="d0"><i class="right"></i><svg><use href="#folder"/></svg>geobreaks</li>
          <li class="d0"><i class="right"></i><svg><use href="#folder"/></svg>I-EM</li>
          <li class="d0"><i class="right"></i><svg><use href="#folder"/></svg>Zoho WorkDrive (Gter)</li>
          <li class="d0"><i class="right"></i><svg><use href="#db"/></svg>administrativeBoundary.xml</li>
          <li class="d0 cut"><i></i><svg><use href="#db"/></svg>administrativeunit.xml</li>
        </ul>
        <div class="scroll"><b class="up"></b><span class="gap1"></span><span class="thumb"></span><span class="gap2"></span><b class="dn"></b></div>
      </div>
    </section>
    <i class="hgrip mid"></i>
    <section class="dock layers">
      <h2>Layers<svg><use href="#float"/></svg><svg><use href="#close"/></svg></h2>
      <div class="tools"><svg><use href="#brush"/></svg><svg><use href="#group"/></svg><span class="dd"><svg><use href="#eye"/></svg></span><span class="dd"><svg><use href="#funnel"/></svg></span><svg class="off"><use href="#epsf"/></svg><i class="drop off"></i><svg><use href="#expd"/></svg><svg><use href="#coll"/></svg><svg><use href="#reml"/></svg></div>
      <div class="frame col">
        <div class="layer"><i class="down"></i><svg class="box" viewBox="0 0 14 14"><path d="M0 0h14v14H0z" fill="#fff"/><path d="M3.500 7.500l2.500 3 5-8" fill="none" stroke="#000" stroke-width="2"/></svg><svg><use href="#ras"/></svg><b>dem20_Genova</b></div>
        <div class="band">Band 1 (Gray)</div>
        <div class="legend"><i></i><div><span>1.722</span><span>0</span></div></div>
      </div>
    </section>
  </div>
  <i class="vsplit"></i>

  <section class="canvas">
    <div class="message"><svg><use href="#bubble"/></svg><p>An update to the Lizmap plugin is available</p><button>Install Updates…</button><svg class="x" viewBox="0 0 18 18"><circle cx="9" cy="9" r="8.700" fill="#333638"/><path d="M5.500 5.500l7 7M12.500 5.500l-7 7" stroke="#fff" stroke-width="2.500"/></svg></div>
    <canvas id="dem" class="dem" width="627" height="401"></canvas>
  </section>

  <section class="dock toolbox">
    <h2>Processing Toolbox<svg><use href="#float"/></svg><svg><use href="#close"/></svg></h2>
    <div class="tools"><span class="dd"><svg><use href="#gears"/></svg></span><span class="dd"><svg><use href="#py"/></svg></span><svg><use href="#clk"/></svg><svg><use href="#doc"/></svg><i class="sep"></i><svg class="off"><use href="#editm"/></svg><i class="sep"></i><svg><use href="#wrench"/></svg></div>
    <div class="search"><svg><use href="#mag"/></svg>Search…</div>
    <div class="frame">
      <ul class="tree">
        <li><i class="right"></i><svg><use href="#clk"/></svg>Recently used</li>
        <li><i class="right"></i><svg><use href="#qgis"/></svg>3D Tiles</li>
        <li><i class="right"></i><svg><use href="#qgis"/></svg>Cartography</li>
        <li><i class="right"></i><svg><use href="#qgis"/></svg>Database</li>
        <li><i class="right"></i><svg><use href="#qgis"/></svg>File tools</li>
        <li><i class="right"></i><svg><use href="#qgis"/></svg>GPS</li>
        <li><i class="right"></i><svg><use href="#qgis"/></svg>Interpolation</li>
        <li><i class="right"></i><svg><use href="#qgis"/></svg>Layer tools</li>
        <li><i class="right"></i><svg><use href="#qgis"/></svg>Mesh</li>
        <li><i class="right"></i><svg><use href="#qgis"/></svg>Network analysis</li>
        <li><i class="right"></i><svg><use href="#qgis"/></svg>Plots</li>
        <li><i class="right"></i><svg><use href="#qgis"/></svg>Raster analysis</li>
        <li><i class="right"></i><svg><use href="#qgis"/></svg>Raster creation</li>
        <li><i class="right"></i><svg><use href="#qgis"/></svg>Raster terrain analysis</li>
        <li><i class="right"></i><svg><use href="#qgis"/></svg>Raster tools</li>
        <li><i class="right"></i><svg><use href="#qgis"/></svg>Vector analysis</li>
        <li><i class="right"></i><svg><use href="#qgis"/></svg>Vector creation</li>
        <li><i class="right"></i><svg><use href="#qgis"/></svg>Vector general</li>
        <li><i class="right"></i><svg><use href="#qgis"/></svg>Vector geometry</li>
        <li><i class="right"></i><svg><use href="#qgis"/></svg>Vector overlay</li>
        <li><i class="right"></i><svg><use href="#qgis"/></svg>Vector selection</li>
        <li><i class="right"></i><svg><use href="#qgis"/></svg>Vector table</li>
        <li><i class="right"></i><svg><use href="#qgis"/></svg>Vector tiles</li>
        <li><i class="right"></i><svg><use href="#gdal"/></svg>GDAL</li>
        <li><i class="right"></i><svg><use href="#grass"/></svg>GRASS</li>
        <li><i class="right"></i><svg><use href="#ors"/></svg>ORS Tools</li>
        <li><i class="right"></i><svg><use href="#py"/></svg>Scripts</li>
      </ul>
    </div>
  </section>
</main>
</div>
<script src="dem.js"></script>
</body>
</html>
```

FILE: styles.css
```css
* { box-sizing: border-box; }
body {
  margin: 0;
  width: 1833px;
  height: 1048px;
  overflow: hidden;
  background: #efefef;
  color: #111;
  font: 14.4px/19px "Noto Sans", "Open Sans", sans-serif;
  letter-spacing: -.06px;
}
h1, h2, p, ul { margin: 0; padding: 0; font-weight: normal; font-size: inherit; }
svg { display: block; flex: none; }
i { flex: none; }
.defs { position: absolute; width: 0; height: 0; }
.window { height: 1048px; display: flex; flex-direction: column; }

.titlebar { height: 29px; display: grid; grid-template-columns: 100px 1fr 54px; align-items: center; }
.logo { width: 22px; height: 22px; margin-left: 6px; }
.titlebar h1 { padding-left: 744px; font-size: 14px; letter-spacing: -.3px; white-space: nowrap; }
.winbtns { width: 56px; height: 14px; }
.menubar { height: 22px; padding: 2px 0 0 12px; display: grid; grid-template-columns: 62px 41px 48px 51px 70px 63px 59px 58px 78px 45px 52px 86px 60px; white-space: nowrap; letter-spacing: -.12px; }
.menubar u { text-underline-offset: 3px; text-decoration-skip-ink: none; }

.toolbar { height: 39px; display: flex; align-items: center; border-top: 1px solid #b7b7b7; background: linear-gradient(#fafafa, #ebebeb); }
.toolbar.last { height: 38px; }
.menubar + .toolbar { border-top-color: #cbcbcb; }
.toolbar svg { width: 33px; height: 32px; padding: 4px 4.5px; }
.toolbar .grip { width: 16px; height: 17px; background: radial-gradient(circle at 1px 1px, #bbb .8px, transparent 1px) 8px 0/4px 3.4px repeat-y, radial-gradient(circle at 1px 1px, #bbb .8px, transparent 1px) 11px 2px/4px 3.4px repeat-y; }
.toolbar .grip:first-child { width: 14px; background-position: 6px 0, 9px 2px; }
.toolbar svg.pressed { border: 1px solid #a9a9a9; border-radius: 3px; background: #dcdcdc; width: 31px; height: 31px; padding: 3px; margin: 0 1px; }
svg.off { opacity: .42; filter: grayscale(.5); }
.drop { width: 12px; height: 5px; background: #555; clip-path: polygon(2px 0, 9px 0, 5.5px 4.500px); }
.drop.off { opacity: .35; }
.toolbar .sep { width: 7px; height: 19px; border-left: 1px solid #ccc; }

.work { flex: 1; border-top: 1px solid #b0b0b0; display: flex; min-height: 0; padding-bottom: 2px; }
.work > * { flex: none; }
.sidebar { width: 53px; background: linear-gradient(90deg, #fafafa, #ebebeb); border-right: 1px solid #b5b5b5; margin-bottom: -2px; }
.hgrip { display: block; width: 17px; height: 5px; margin: 6px 0 1px 20px; background: radial-gradient(circle at 1px 1px, #bbb .8px, transparent 1px) 0 0/3.300px 3px; }
.sidebar div { height: 32px; display: flex; align-items: center; padding-left: 9px; }
.sidebar div svg { width: 24px; height: 24px; }
.sidebar .drop { margin-left: 5px; }

.docks { width: 380px; display: flex; flex-direction: column; }
.dock { display: flex; flex-direction: column; min-height: 0; }
.dock h2 { height: 22px; display: flex; align-items: center; padding: 0 1px 1px 4px; }
.dock h2 svg { width: 12px; height: 12px; margin-left: 2px; }
.dock h2 svg:first-of-type { margin-left: auto; }
.tools { height: 29px; display: flex; align-items: center; padding: 0 0 3px 8px; gap: 9px; }
.tools svg { width: 16px; height: 16px; }
.tools .dd { display: flex; position: relative; }
.tools .dd::after { content: ""; position: absolute; right: -2px; bottom: -1px; border: 2.500px solid transparent; border-top: 3px solid #444; border-bottom: 0; }
.tools .drop { margin: 0 -5px 0 -5px; }
.tools .sep { width: 1px; height: 11px; background: #c8c8c8; margin-right: -3px; }
.frame { flex: 1; border: 1px solid #b0b0b0; background: #fff; display: flex; min-height: 0; overflow: hidden; }
.frame.col { flex-direction: column; }
.browser { height: 437px; }
.mid { margin: 1px 0 0 182px; height: 4px; }
.layers { flex: 1; }

.tree { flex: 1; list-style: none; overflow: hidden; }
.tree li { height: 19px; display: flex; align-items: center; white-space: nowrap; padding: 0 0 1px 6px; }
.tree li > i { width: 15px; height: 8px; }
.tree li svg { width: 16px; height: 16px; margin-right: 6px; }
.right { background: #555; clip-path: polygon(2px 0, 6px 4px, 2px 8px); }
.down { background: #555; clip-path: polygon(0 2px, 7px 2px, 3.500px 6px); }
.tree li.d0 { padding-left: 36px; }
.tree li.d1 { padding-left: 52px; }
.tree li.d2 { padding-left: 68px; }
.tree li.d3 { padding-left: 84px; }
.tree .wide { letter-spacing: .04px; }
.tree .sel { background: #308cc6; margin-right: 9px; color: #d3e6f3; padding-bottom: 0; }
.tree .sel span { flex: 1; margin-left: -3px; padding-left: 2px; border: 1px solid #2b7fb5; line-height: 16px; height: 19px; letter-spacing: .03px; }
.scroll { width: 15px; border-left: 1px solid #b5b5b5; display: flex; flex-direction: column; background: #dfdfdf; }
.scroll b { height: 14px; background: #f5f5f5; display: grid; place-items: center; }
.scroll b::after { content: ""; border: 4px solid transparent; }
.scroll .up { border-bottom: 1px solid #b5b5b5; }
.scroll .dn { border-top: 1px solid #b5b5b5; }
.scroll .up::after { border-bottom-color: #444; border-top: 0; }
.scroll .dn::after { border-top-color: #444; border-bottom: 0; }
.gap1 { height: 131px; }
.thumb { height: 90px; background: #fafafa; border: solid #b5b5b5; border-width: 1px 0; }
.gap2 { flex: 1; }

.layer { height: 19px; background: #308cc6; display: flex; align-items: center; padding-left: 7px; color: #fff; }
.layer .down { width: 16px; height: 8px; background: #114060; }
.layer .box { width: 14px; height: 14px; margin-right: 6px; }
.layer svg { width: 16px; height: 16px; margin-right: 6px; }
.layer b { letter-spacing: 0; text-decoration: underline; text-underline-offset: 3px; text-decoration-skip-ink: none; }
.band { padding-left: 43px; height: 18px; line-height: 18px; }
.legend { display: flex; padding-left: 43px; height: 96px; }
.legend i { width: 16px; background: linear-gradient(#fff, #000); }
.legend div { display: flex; flex-direction: column; justify-content: space-between; margin: -1px 0 0 8px; height: 98px; }

.vsplit { width: 6px; background: radial-gradient(circle at 1px 1px, #bbb .8px, transparent 1px) 3px 432px/3px 3.300px no-repeat; }
.canvas { width: 1116px; border: 1px solid #b0b0b0; margin: 1px 1px 0 0; background: #fff; }
.message { height: 38px; margin: -1px -1px 0; border: 1px solid #b3cfe2; background: #e7f5fe; display: flex; align-items: center; padding: 0 0 2px 11px; color: #2a5ca8; }
.message svg { width: 21px; height: 20px; margin-right: 11px; }
.message p { flex: 1; letter-spacing: -.09px; }
.message button { width: 123px; height: 25px; padding: 0; border: 1px solid #a6a6a6; border-radius: 3px; background: linear-gradient(#fcfcfc, #efefef); color: #111; font: inherit; letter-spacing: 0; }
.message .x { width: 18px; height: 18px; margin: 0 22px 0 34px; }
.dem { display: block; margin: 199px 0 0 243px; background: #000; }

.toolbox { width: 284px; margin-left: 5px; }
.toolbox h2 { padding-right: 0; width: 282px; }
.toolbox .tree li > i { width: 17px; }
.toolbox .tree li { padding-left: 6px; letter-spacing: -.03px; }
.search { height: 25px; border: 1px solid #b0b0b0; border-radius: 2px; background: #fff; display: flex; align-items: center; color: #8a8a8a; padding-left: 7px; letter-spacing: .1px; }
.search svg { width: 14px; height: 14px; margin-right: 6px; }
```

FILE: dem.js
```js
// Elevation raster: a drainage network is grown from coast and valley floors,
// then relief is accumulated upstream and shaded from black (sea level) to white.
(function () {
  const W = 627, H = 401, N = W * H;
  const land = [0,135,5,131,10,132,15,121,25,119,26,114,17,108,18,95,23,92,28,93,31,80,38,83,58,85,61,83,68,88,73,83,93,83,101,93,105,108,111,110,116,125,112,131,119,128,122,136,125,150,122,162,135,165,135,157,140,155,140,128,148,122,161,119,156,111,159,100,182,100,185,96,198,110,215,103,219,96,213,83,210,66,210,55,195,34,211,25,223,0,243,0,249,10,263,11,270,7,280,11,282,23,293,33,296,55,303,48,315,46,323,53,332,58,332,73,337,82,355,90,364,89,380,76,394,73,394,54,420,50,426,56,420,66,444,70,446,59,456,61,460,69,480,86,489,80,497,80,504,86,510,76,517,76,521,66,529,71,529,86,544,95,565,96,575,103,572,115,581,123,582,136,576,155,577,170,560,170,560,180,554,205,544,211,543,226,562,220,566,233,560,239,564,255,575,258,578,270,591,280,581,295,580,305,594,315,615,336,627,353,627,368,617,365,602,368,596,380,599,388,589,400,582,393,577,378,564,384,547,380,539,368,522,366,514,353,494,326,480,311,464,307,440,301,417,288,404,293,399,306,404,328,384,318,364,311,365,290,350,271,317,263,286,253,240,240,210,226,193,226,173,216,133,220,106,216,73,238,66,246,38,256,21,248,14,236,10,216,22,215,22,209,50,206,60,197,60,190,57,180,55,153,50,150,30,153,20,148,17,157,10,156,3,145];
  const valleys = [
    [196,223,200,193,210,166,206,146,193,133,180,116],[213,153,213,126,223,106],[210,166,232,150,250,142],
    [236,223,253,196,290,196,323,206],[342,193,367,206,400,226,427,241,460,266,484,280,490,290,488,309],
    [484,280,502,256,510,226,517,210,530,196],[510,226,493,200,484,183],[424,236,427,213,429,190],
    [384,216,385,186,380,163],[364,206,360,180],[524,351,564,351,617,353],[490,290,530,300,557,286],
    [240,91,270,126,293,140,321,140,350,156,360,140],[240,91,237,60,233,30,243,15],[270,126,290,118,320,108],
    [444,70,434,83,444,110,417,130,384,116],[529,86,520,123,484,153,467,173],[524,121,570,143],
    [56,90,55,110,63,126,80,146,110,160],[65,104,95,100],[55,240,48,220],[106,214,90,195,75,175],[110,210,125,190]];
  const tone = [30,100,75,90,100,90,20,140,80,60,140,110,110,145,95,65,175,130,100,185,70,60,205,140,25,220,120,40,240,55,100,205,45,130,175,125,150,130,120,170,110,110,150,200,60,175,185,85,195,150,38,200,200,22,230,120,60,225,20,75,240,50,75,270,30,95,220,90,75,270,80,105,290,60,100,320,80,125,260,150,62,290,120,105,300,170,88,330,130,115,240,200,55,290,200,36,310,235,85,280,235,55,345,200,55,330,225,85,360,110,170,385,90,150,410,65,155,450,90,115,470,120,160,400,120,130,350,150,115,430,160,145,480,170,155,520,100,145,500,130,165,550,110,185,570,110,220,570,150,190,545,172,240,520,165,200,510,190,115,545,195,150,470,180,140,440,190,90,400,185,85,375,190,55,400,225,24,360,240,75,400,255,75,350,255,55,430,265,65,375,300,60,410,300,12,450,215,110,470,230,110,470,250,60,500,250,45,490,280,18,540,235,110,555,250,120,550,285,48,560,300,90,575,290,115,510,310,75,530,330,66,530,350,22,570,325,110,600,340,80,560,360,42,610,360,80,570,375,50,590,385,70,490,308,18,450,295,35,
    133,218,8,160,218,10,190,225,10,220,230,10,250,241,14,290,254,18,320,262,16,350,270,14,70,238,14,40,255,20,20,245,50,390,285,15,420,286,12,515,352,12];
  let s = 20240611;
  const rnd = () => ((s = (s * 1664525 + 1013904223) >>> 0) / 4294967296);

  const cv = document.getElementById('dem'), ctx = cv.getContext('2d', { willReadFrequently: true });
  ctx.fillStyle = '#000'; ctx.fillRect(0, 0, W, H);
  ctx.fillStyle = '#fff'; ctx.beginPath();
  for (let i = 0; i < land.length; i += 2) {
    const x = land[i], y = land[i + 1], a = land[(i + 2) % land.length], b = land[(i + 3) % land.length];
    const n = Math.max(1, Math.round(Math.hypot(a - x, b - y) / 4));
    for (let k = 0; k < n; k++) ctx.lineTo(x + (a - x) * k / n + (rnd() - .5) * 2, y + (b - y) * k / n + (rnd() - .5) * 2);
  }
  ctx.fill();
  const px = ctx.getImageData(0, 0, W, H).data;
  const mask = new Uint8Array(N);
  for (let i = 0; i < N; i++) mask[i] = px[i * 4] > 127 ? 1 : 0;

  // box blur limited to a mask
  const blur = (src, r, mk) => { const m = Float32Array.from(mk || mask);
    const pass = (g, step, len, lines, ls) => { const o = new Float32Array(N);
      for (let l = 0; l < lines; l++) { let acc = 0; const base = l * ls;
        for (let k = -r; k < len; k++) { if (k + r < len) acc += g[base + (k + r) * step]; if (k - r - 1 >= 0) acc -= g[base + (k - r - 1) * step];
          if (k >= 0) o[base + k * step] = acc; } } return o; };
    const num = pass(pass(Float32Array.from(src, (v, i) => v * m[i]), 1, W, H, W), W, H, W, 1);
    const den = pass(pass(m, 1, W, H, W), W, H, W, 1);
    return num.map((v, i) => m[i] ? v / Math.max(den[i], 1) : 0); };

  // priority queue
  const heap = [];
  const push = (d, i) => { let k = heap.length; heap.push([d, i]);
    while (k) { const p = (k - 1) >> 1; if (heap[p][0] <= heap[k][0]) break; [heap[p], heap[k]] = [heap[k], heap[p]]; k = p; } };
  const pop = () => { const t = heap[0], e = heap.pop();
    if (heap.length) { heap[0] = e; let k = 0; for (;;) { let c = 2 * k + 1; if (c >= heap.length) break;
      if (c + 1 < heap.length && heap[c + 1][0] < heap[c][0]) c++; if (heap[k][0] <= heap[c][0]) break;
      [heap[c], heap[k]] = [heap[k], heap[c]]; k = c; } } return t; };

  // rock resistance at two scales bends the channels
  const noise = r => { const a = blur(blur(Float32Array.from({ length: N }, rnd), r), r);
    let m = 0, q = 0, c = 0; for (let i = 0; i < N; i++) if (mask[i]) { m += a[i]; c++; } m /= c;
    for (let i = 0; i < N; i++) if (mask[i]) q += (a[i] - m) ** 2; q = Math.sqrt(q / c);
    return a.map(v => (v - m) / q); };
  const n1 = noise(2), n2 = noise(5);
  const dist = new Float32Array(N).fill(1e9), par = new Int32Array(N).fill(-1), cost = new Float32Array(N);
  for (let i = 0; i < N; i++) cost[i] = (.4 + 1.4 * rnd() * rnd()) * Math.exp(n1[i] * .5 + n2[i] * .45);
  const seed = (x, y) => { x = Math.round(x); y = Math.round(y); const i = y * W + x;
    if (x >= 0 && y >= 0 && x < W && y < H && mask[i] && dist[i]) { dist[i] = 0; push(0, i); } };
  valleys.forEach(v => {
    for (let k = 0; k + 3 < v.length; k += 2) {
      const n = 40; for (let t = 0; t <= n; t++) {
        const f = t / n, w = Math.sin(f * 9 + k) * 1.8 * Math.sin(f * Math.PI);
        seed(v[k] + (v[k + 2] - v[k]) * f + w, v[k + 1] + (v[k + 3] - v[k + 1]) * f + w); } } });
  // southern coast
  const at = land.indexOf(522, 200);
  for (let i = at; i + 3 < land.length && !(land[i] === 14 && land[i + 1] === 236); i += 2)
    for (let t = 0; t < 60; t++) { const f = t / 60, x = land[i] + (land[i + 2] - land[i]) * f, y = land[i + 1] + (land[i + 3] - land[i + 1]) * f;
      seed(x, y); seed(x, y - 1); seed(x, y - 2); }
  const order = [], done = new Uint8Array(N);
  while (heap.length) {
    const [d, i] = pop(); if (done[i]) continue; done[i] = 1; order.push(i);
    const x = i % W, y = (i / W) | 0;
    for (let dy = -1; dy < 2; dy++) for (let dx = -1; dx < 2; dx++) {
      if (!dx && !dy) continue; const a = x + dx, b = y + dy; if (a < 0 || b < 0 || a >= W || b >= H) continue;
      const j = b * W + a; if (!mask[j] || done[j]) continue;
      const nd = d + cost[j] * (dx && dy ? 1.414 : 1);
      if (nd < dist[j]) { dist[j] = nd; par[j] = i; push(nd, j); } } }
  const area = new Float32Array(N).fill(1), z = new Float32Array(N);
  for (let k = order.length - 1; k >= 0; k--) { const i = order[k]; if (par[i] >= 0) area[par[i]] += area[i]; }
  for (const i of order) if (par[i] >= 0) z[i] = z[par[i]] + 1 / Math.pow(area[i], .45);

  const fine = blur(z, 1), mean = blur(blur(z, 14), 10);
  let dev = 0, cnt = 0;
  for (let i = 0; i < N; i++) if (mask[i]) { dev += (fine[i] - mean[i]) ** 2; cnt++; }
  dev = Math.sqrt(dev / cnt);
  let tones = new Float32Array(N);
  for (let y = 0; y < H; y++) for (let x = 0; x < W; x++) { const i = y * W + x; if (!mask[i]) continue;
    let n = 0, q = 0; for (let k = 0; k < tone.length; k += 3) { const d2 = (x - tone[k]) ** 2 + (y - tone[k + 1]) ** 2 + 30, w = 1 / (d2 * d2); n += w * tone[k + 2]; q += w; }
    tones[i] = n / q; }
  tones = blur(tones, 5);
  const out = ctx.createImageData(W, H);
  for (let i = 0; i < N; i++) {
    let v = 0;
    if (mask[i]) { const t = tones[i], g = (z[i] * .25 + fine[i] * .75 - mean[i]) / dev;
      const amp = Math.min(18, t * .34);
      v = Math.max(0, Math.min(255, t + Math.max(-2.4, Math.min(2.8, g)) * amp)); }
    out.data[i * 4] = out.data[i * 4 + 1] = out.data[i * 4 + 2] = v; out.data[i * 4 + 3] = 255;
  }
  ctx.putImageData(out, 0, 0);
})();
```
